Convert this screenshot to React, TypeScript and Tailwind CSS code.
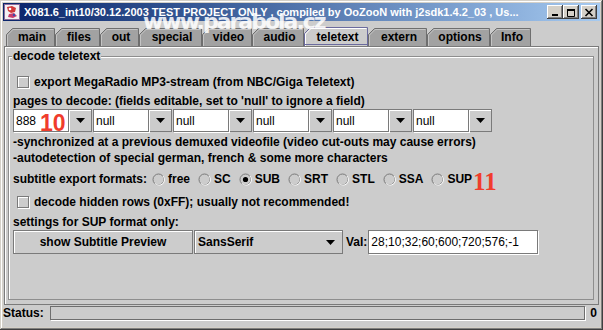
import React from "react";

const SANS = "font-['Liberation_Sans',Arial,sans-serif]";

const TABS = [
  { label: "main", w: 49, cls: "w-[49px]" },
  { label: "files", w: 45, cls: "w-[45px]" },
  { label: "out", w: 39, cls: "w-[39px]" },
  { label: "special", w: 63, cls: "w-[63px]" },
  { label: "video", w: 50, cls: "w-[50px]" },
  { label: "audio", w: 52, cls: "w-[52px]" },
  { label: "teletext", w: 64, cls: "w-[64px]", active: true },
  { label: "extern", w: 59, cls: "w-[59px]" },
  { label: "options", w: 63, cls: "w-[63px]" },
  { label: "Info", w: 41, cls: "w-[41px]" },
];

const FORMATS = ["free", "SC", "SUB", "SRT", "STL", "SSA", "SUP"];

function AppIcon() {
  return (
    <svg width="16" height="16" viewBox="0 0 16 16">
      <rect x="0.5" y="0.5" width="15" height="15" fill="#f4f0f4" stroke="#8a6a9a" />
      <path d="M3 3 L8 2 L12 4 L11 8 L7 9 L4 7 Z" fill="#d23a3a" />
      <path d="M5 10 L10 9 L13 12 L9 14 L4 13 Z" fill="#c83c6c" />
      <circle cx="6" cy="5" r="1.3" fill="#fff" />
      <circle cx="10" cy="11" r="1.2" fill="#3a4ab0" />
    </svg>
  );
}

function WinButton({ kind }: { kind: "min" | "max" | "close" }) {
  return (
    <div className="flex h-[14px] w-[16px] items-center justify-center bg-[#d4d0c8] shadow-[inset_-1px_-1px_0_#404040,inset_1px_1px_0_#ffffff,inset_-2px_-2px_0_#808080]">
      <svg width="10" height="9" viewBox="0 0 10 9">
        {kind === "min" && <rect x="2" y="6" width="6" height="2" fill="#000" />}
        {kind === "max" && (
          <path d="M1 1.5 H9 M1.5 1 V8.5 H8.5 V1" stroke="#000" strokeWidth="1" fill="none" />
        )}
        {kind === "max" && <rect x="1" y="1" width="8" height="2" fill="#000" />}
        {kind === "close" && (
          <path d="M1.5 1 L8.5 8 M8.5 1 L1.5 8" stroke="#000" strokeWidth="1.6" />
        )}
      </svg>
    </div>
  );
}

function Tab({ label, w, cls, active }: { label: string; w: number; cls: string; active?: boolean }) {
  const h = active ? 19 : 18;
  return (
    <div className={`relative shrink-0 ${cls} ${active ? "h-[19px]" : "h-[18px]"}`}>
      <svg className="absolute inset-0" width={w} height={h}>
        <path
          d={`M0.5 ${h} V6.5 L6.5 0.5 H${w - 0.5} V${h}`}
          fill={active ? "#cccccc" : "#a2a2a2"}
          stroke={active ? "#6b6b9e" : "#6e6e6e"}
        />
        <path d={`M1.5 ${h} V7 L7 1.5 H${w - 1.5}`} fill="none" stroke={active ? "#ffffff" : "#c4c4c4"} />
        {active && <path d={`M0.5 ${h - 1.5} H${w - 0.5}`} stroke="#6b6b9e" />}
      </svg>
      <div className="relative flex h-full items-center justify-center pl-[3px] text-[12px] font-bold text-black">
        {label}
      </div>
    </div>
  );
}

function Arrow() {
  return (
    <svg width="9" height="5" viewBox="0 0 9 5">
      <path d="M0 0 H9 L4.5 5 Z" fill="#000" />
    </svg>
  );
}

function EditCombo({ value, children }: { value: string; children?: React.ReactNode }) {
  return (
    <div className="flex h-[23px] w-[79px] shrink-0">
      <div className="relative flex w-[56px] items-center border border-[#7a7a7a] bg-white pl-[2px] text-[12px] font-normal shadow-[1px_1px_0_#ffffff]">
        {value}
        {children}
      </div>
      <div className="flex w-[23px] items-center justify-center border border-l-0 border-[#7a7a7a] bg-[#cccccc] shadow-[inset_1px_1px_0_#ffffff]">
        <Arrow />
      </div>
    </div>
  );
}

function CheckBox() {
  return <div className="h-[12px] w-[12px] shrink-0 border border-[#7a7a7a] bg-[#cccccc] shadow-[inset_1px_1px_0_#ffffff,1px_1px_0_#ffffff]" />;
}

function Radio({ label, checked }: { label: string; checked?: boolean }) {
  return (
    <div className="flex items-center">
      <svg width="13" height="13" viewBox="0 0 13 13">
        <circle cx="6.5" cy="6.5" r="5.5" fill="#cccccc" stroke="#7a7a7a" />
        <path d="M3 10.5 A5 5 0 0 0 11 3" fill="none" stroke="#ffffff" />
        {checked && <circle cx="6.5" cy="6.5" r="2.6" fill="#000" />}
      </svg>
      <span className="ml-[3px]">{label}</span>
    </div>
  );
}

export default function App() {
  return (
    <div
      className={`relative flex h-[330px] w-[603px] flex-col overflow-hidden bg-[#d4d0c8] p-[3px] text-[12px] font-bold leading-none text-black ${SANS} shadow-[inset_-1px_-1px_0_#404040,inset_1px_1px_0_#d4d0c8,inset_-2px_-2px_0_#808080,inset_2px_2px_0_#ffffff]`}
    >
      {/* title bar */}
      <div className="flex h-[18px] shrink-0 items-center bg-gradient-to-r from-[#0a246a] to-[#a6caf0] pl-[1px] pr-[3px]">
        <AppIcon />
        <div className="ml-[4px] flex-1 overflow-hidden whitespace-nowrap text-[11px] font-bold text-white">
          X081.6_int10/30.12.2003 TEST PROJECT ONLY , compiled by OoZooN with j2sdk1.4.2_03 , Us...
        </div>
        <div className="flex items-center">
          <WinButton kind="min" />
          <WinButton kind="max" />
          <div className="ml-[2px]">
            <WinButton kind="close" />
          </div>
        </div>
      </div>

      {/* content pane */}
      <div className="flex flex-1 flex-col bg-[#cccccc]">
        <div className="flex h-[25px] items-end pl-[3px]">
          {TABS.map((t) => (
            <Tab key={t.label} {...t} />
          ))}
        </div>

        <div className="mx-[1px] flex h-[259px] flex-col border border-[#7a7a7a] shadow-[inset_1px_1px_0_#ffffff]">
          <div className="relative mb-[4px] ml-[3px] mr-[4px] mt-[9px] flex flex-1 flex-col border border-[#8e8e8e] pl-[4px] pt-[15px] shadow-[inset_1px_1px_0_#ffffff]">
            <div className="absolute left-[3px] top-[-7px] bg-[#cccccc] px-[1px] text-[12px]">decode teletext</div>

            <div className="flex h-[20px] items-center gap-[5px] pl-[4px]">
              <CheckBox />
              <span>export MegaRadio MP3-stream (from NBC/Giga Teletext)</span>
            </div>

            <div className="mt-[1px] flex h-[16px] items-center">
              pages to decode: (fields editable, set to 'null' to ignore a field)
            </div>

            <div className="flex gap-[1px]">
              <EditCombo value="888">
                <span className="absolute left-[26px] top-[2px] font-['Liberation_Sans',Arial,sans-serif] text-[23px] font-bold leading-none text-[#f03c2c]">
                  10
                </span>
              </EditCombo>
              <EditCombo value="null" />
              <EditCombo value="null" />
              <EditCombo value="null" />
              <EditCombo value="null" />
              <EditCombo value="null" />
            </div>

            <div className="mt-[2px] flex h-[16px] items-center">
              -synchronized at a previous demuxed videofile (video cut-outs may cause errors)
            </div>
            <div className="flex h-[16px] items-center">
              -autodetection of special german, french &amp; some more characters
            </div>

            <div className="mt-[2px] flex h-[22px] items-center">
              <span>subtitle export formats:</span>
              <div className="ml-[5px] flex items-center gap-[8px]">
                {FORMATS.map((f) => (
                  <Radio key={f} label={f} checked={f === "SUB"} />
                ))}
              </div>
              <span className="ml-[1px] mt-[4px] font-['Liberation_Serif',serif] text-[25px] font-bold leading-none text-[#f03c2c]">
                11
              </span>
            </div>

            <div className="mt-[2px] flex h-[20px] items-center gap-[5px] pl-[4px]">
              <CheckBox />
              <span>decode hidden rows (0xFF); usually not recommended!</span>
            </div>

            <div className="mt-[2px] flex h-[16px] items-center">settings for SUP format only:</div>

            <div className="flex h-[24px]">
              <div className="flex w-[180px] items-center justify-center border border-[#7a7a7a] bg-[#cccccc] shadow-[inset_1px_1px_0_#ffffff]">
                show Subtitle Preview
              </div>
              <div className="ml-[1px] flex w-[149px] items-center justify-between border border-[#7a7a7a] bg-[#cccccc] pl-[3px] pr-[7px] shadow-[inset_1px_1px_0_#ffffff]">
                <span>SansSerif</span>
                <Arrow />
              </div>
              <span className="ml-[3px] flex items-center">Val:</span>
              <div className="ml-[1px] flex w-[170px] items-center border border-[#7a7a7a] bg-white pl-[2px] font-normal shadow-[1px_1px_0_#ffffff]">
                28;10;32;60;600;720;576;-1
              </div>
            </div>
          </div>
        </div>

        {/* status row */}
        <div className="mt-[1px] flex h-[14px] items-center pr-[3px]">
          <span>Status:</span>
          <div className="ml-[6px] h-full flex-1 border border-[#6e6e6e] bg-[#cccccc] shadow-[1px_1px_0_#ffffff]" />
          <span className="ml-[5px]">0</span>
        </div>
      </div>

      {/* watermark */}
      <div className="pointer-events-none absolute left-[143px] top-[11px] font-['DejaVu_Sans',sans-serif] text-[22px] font-bold leading-none tracking-[-2px] text-white/85">
        www.parabola.cz
      </div>
    </div>
  );
}
